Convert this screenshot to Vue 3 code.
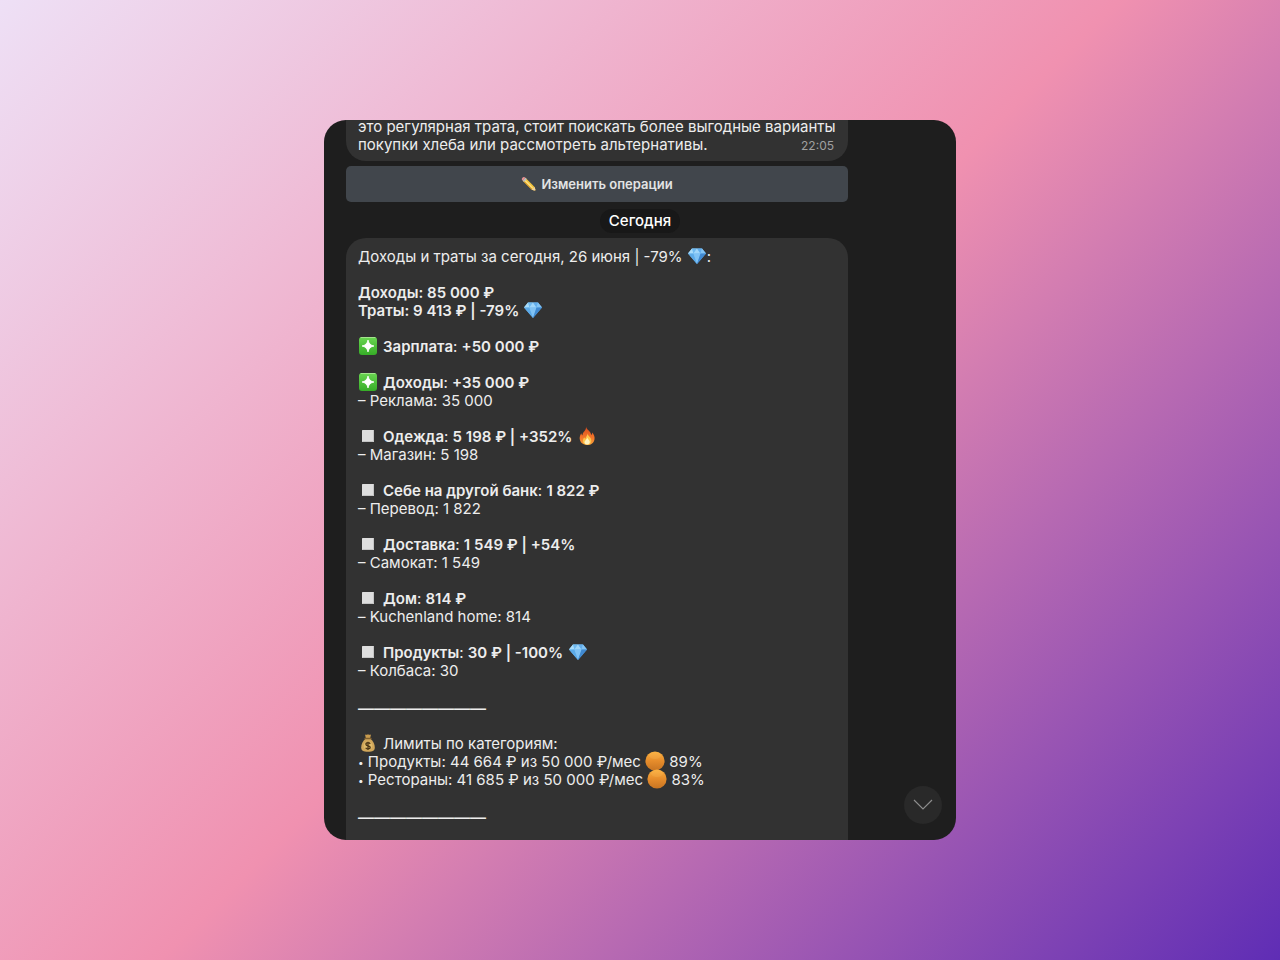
<template>
  <main class="backdrop">
    <svg class="symbols" aria-hidden="true">
      <defs>
        <linearGradient id="gem-fill" x1="0" y1="0" x2="1" y2="1">
          <stop offset="0" stop-color="#9bdcff" />
          <stop offset="1" stop-color="#3d8fe0" />
        </linearGradient>
        <linearGradient id="green-fill" x1="0" y1="0" x2="0" y2="1">
          <stop offset="0" stop-color="#6ad552" />
          <stop offset="1" stop-color="#36ad27" />
        </linearGradient>
        <linearGradient id="orange-fill" x1="0" y1="0" x2="0" y2="1">
          <stop offset="0" stop-color="#fbb03f" />
          <stop offset="0.5" stop-color="#e68c2b" />
          <stop offset="1" stop-color="#c87422" />
        </linearGradient>
        <linearGradient id="fire-fill" x1="0" y1="0" x2="0" y2="1">
          <stop offset="0" stop-color="#d94a1c" />
          <stop offset="0.6" stop-color="#f2762a" />
          <stop offset="1" stop-color="#f6a13a" />
        </linearGradient>
      </defs>
      <symbol id="gem" viewBox="0 0 20 20">
        <path d="M5 2.500h10L19 7.500l-9 10.500L1 7.500z" fill="url(#gem-fill)" />
        <path d="M5 2.500L6.500 7.500H1z" fill="#a9dcfa" />
        <path d="M5 2.500h5l-3.500 5z" fill="#6fb9f0" />
        <path d="M10 2.500l3.500 5h-7z" fill="#a0d6fa" />
        <path d="M10 2.500h5l-1.500 5z" fill="#62adec" />
        <path d="M15 2.500l4 5h-5.500z" fill="#84c4f4" />
        <path d="M1 7.500h5.500L10 18z" fill="#5caae8" />
        <path d="M6.500 7.500h7L10 18z" fill="#80c2f4" />
        <path d="M13.500 7.500H19L10 18z" fill="#4089d0" />
      </symbol>
      <symbol id="sparkle" viewBox="0 0 20 20">
        <rect x="1" y="1" width="18" height="18" rx="3" fill="url(#green-fill)" />
        <path d="M3 1.500h14" stroke="#a4e58d" stroke-width="1" stroke-linecap="round" />
        <path d="M10 4Q10.900 9.100 16 10Q10.900 10.900 10 16Q9.100 10.900 4 10Q9.100 9.100 10 4z" fill="#fff" stroke="#fff" stroke-width="0.800" />
      </symbol>
      <symbol id="square" viewBox="0 0 20 20">
        <rect x="4" y="4" width="12" height="12" rx="0.500" fill="#dedede" />
        <path d="M4.500 15.500h11v-11" fill="none" stroke="#c4c4c4" />
      </symbol>
      <symbol id="fire" viewBox="0 0 20 20">
        <path d="M9 0.500C9.500 4 14 5 14.200 9c.8-.6 1-1.500.9-2.600C17 8.500 18 10.700 17.500 13.200 17 17 14 19 10.400 19 6.300 19 3 16.600 2.700 12.800c-.2-2.300.7-4 1.500-5.600.2 1 .6 1.800 1.300 2.200C5.500 5.500 9.500 5 9 0.500z" fill="url(#fire-fill)" />
        <path d="M10.500 7.500c.3 2.500 3.800 3.500 3.800 7 0 2.600-1.700 4.200-4.200 4.200-2.600 0-4.300-1.700-4.200-4 .1-1.600.8-2.600 1.400-3.500.3 1 .7 1.400 1.200 1.600.2-2 1.900-2.800 2-5.300z" fill="#fdc64d" />
        <path d="M10.300 11.500c.3 1.800 2.500 2.600 2.500 4.600 0 1.600-1 2.500-2.700 2.500-1.600 0-2.700-1-2.600-2.500.1-1.700 2.500-2.600 2.800-4.600z" fill="#fff3c0" />
      </symbol>
      <symbol id="money" viewBox="0 0 20 20">
        <path d="M7.500 5.800C4.500 8.500 3.200 11.500 3.200 14.500c0 3 2 4.300 6.800 4.300s6.800-1.300 6.800-4.300c0-3-1.300-6-4.300-8.700z" fill="#d0a65a" />
        <path d="M7 1.500c1.200.7 2 .3 3-.3 1 .6 1.800 1 3 .3l-.8 3.500H7.800z" fill="#c99c4f" />
        <path d="M7 5.500h6" stroke="#80602e" stroke-width="1.400" stroke-linecap="round" />
        <circle cx="10" cy="12.800" r="4.300" fill="#e0bb6b" />
        <path d="M12.200 10.800c-.5-.8-1.200-1.100-2.200-1.100-1.200 0-2.100.6-2.100 1.500 0 2.300 4.300.9 4.300 3.100 0 .9-.9 1.600-2.200 1.600-1.100 0-1.900-.4-2.300-1.200M10 8.700v8.200" fill="none" stroke="#4a3415" stroke-width="1.300" />
      </symbol>
      <symbol id="circle" viewBox="0 0 20 20">
        <circle cx="10" cy="10" r="9.600" fill="url(#orange-fill)" />
        <ellipse cx="10" cy="4.500" rx="6" ry="3.500" fill="#ffc566" opacity="0.200" />
      </symbol>
      <symbol id="pencil" viewBox="0 0 20 20">
        <path d="M5.500 2.200L17 13.700l1.500 4.900-5-1.400L2.200 5.800z" fill="#f4c63d" />
        <path d="M4.300 3.600L15.800 15l-2.300 2.200L2.200 5.800z" fill="#d99a25" />
        <path d="M3.900 4.500L15 15.700" stroke="#ffe07a" stroke-width="2" />
        <path d="M2.200 5.800C.6 4.300.6 3.300 1.800 2.100s2.400-1.200 3.700.1z" fill="#e88f93" />
        <path d="M2.200 5.800l3.300-3.600 1.700 1.700-3.400 3.500z" fill="#b8bcc2" />
        <path d="M13.500 17.200l3.500-3.500 1.500 4.900z" fill="#efd1a2" />
        <path d="M17 18.200l1-1 .5 1.400z" fill="#222" />
      </symbol>
    </svg>

    <section class="chat">
      <article class="bubble previous">
        <p>это регулярная трата, стоит поискать более выгодные варианты</p>
        <div class="last-line">
          <p>покупки хлеба или рассмотреть альтернативы.</p>
          <time>22:05</time>
        </div>
      </article>
      <button class="edit" type="button">
        <svg class="pencil"><use href="#pencil" /></svg>
        Изменить операции
      </button>

      <div class="date"><span>Сегодня</span></div>

      <article class="bubble report">
        <p>Доходы и траты за сегодня, 26 июня | -79% <svg class="emoji"><use href="#gem" /></svg>:</p>
        <p class="strong">
          Доходы: 85 000 ₽<br>
          Траты: 9 413 ₽ | -79% <svg class="emoji"><use href="#gem" /></svg>
        </p>
        <p v-for="item in items" :key="item.name">
          <svg class="emoji"><use :href="'#' + item.icon" /></svg>
          <span class="name"><b>{{ item.name }}</b>: <b>{{ item.amount }}</b></span>
          <svg v-if="item.mark" class="emoji"><use :href="'#' + item.mark" /></svg>
          <template v-if="item.detail"><br>– {{ item.detail }}</template>
        </p>
        <p class="rule">————————</p>
        <p>
          <svg class="emoji"><use href="#money" /></svg>
          <span class="name">Лимиты по категориям:</span>
          <template v-for="limit in limits" :key="limit.name">
            <br><span class="bullet">•</span> {{ limit.name }}: {{ limit.spent }} ₽ из 50 000 ₽/мес <svg class="emoji"><use href="#circle" /></svg> {{ limit.percent }}%
          </template>
        </p>
        <p class="rule">————————</p>
      </article>

      <button class="scroll-down" type="button" aria-label="Вниз">
        <svg viewBox="0 0 20 12"><path d="M1 1l9 9 9-9" /></svg>
      </button>
    </section>
  </main>
</template>

<script setup>
const items = [
  { icon: 'sparkle', name: 'Зарплата', amount: '+50 000 ₽' },
  { icon: 'sparkle', name: 'Доходы', amount: '+35 000 ₽', detail: 'Реклама: 35 000' },
  { icon: 'square', name: 'Одежда', amount: '5 198 ₽ | +352%', mark: 'fire', detail: 'Магазин: 5 198' },
  { icon: 'square', name: 'Себе на другой банк', amount: '1 822 ₽', detail: 'Перевод: 1 822' },
  { icon: 'square', name: 'Доставка', amount: '1 549 ₽ | +54%', detail: 'Самокат: 1 549' },
  { icon: 'square', name: 'Дом', amount: '814 ₽', detail: 'Kuchenland home: 814' },
  { icon: 'square', name: 'Продукты', amount: '30 ₽ | -100%', mark: 'gem', detail: 'Колбаса: 30' }
];

const limits = [
  { name: 'Продукты', spent: '44 664', percent: 89 },
  { name: 'Рестораны', spent: '41 685', percent: 83 }
];
</script>

<style>
body {
  margin: 0;
}
</style>

<style scoped>
.backdrop {
  box-sizing: border-box;
  min-height: 100vh;
  padding: 120px 24px;
  display: flex;
  justify-content: center;
  background: linear-gradient(135deg, #eee0f6 0%, #f091b0 50%, #5f2db5 100%);
  font-family: Inter, "Liberation Sans", sans-serif;
  font-size: 15px;
  line-height: 18px;
  color: #ededed;
}
.symbols {
  position: absolute;
  width: 0;
  height: 0;
}
.chat {
  position: relative;
  box-sizing: border-box;
  width: 100%;
  max-width: 632px;
  height: calc(100vh - 240px);
  padding: 0 108px 0 22px;
  border-radius: 22px;
  overflow: hidden;
  background: #1e1e1e;
}
.bubble {
  box-sizing: border-box;
  background: #323232;
}
p {
  margin: 0;
  white-space: nowrap;
}
.previous {
  padding: 0 14px 7px 12px;
  margin-top: -2px;
  border-radius: 0 0 20px 20px;
}
.last-line {
  display: flex;
  justify-content: space-between;
  align-items: flex-end;
}
time {
  font-size: 12px;
  line-height: 16px;
  color: #a0a0a0;
}
.edit {
  display: flex;
  align-items: center;
  justify-content: center;
  gap: 4px;
  width: 100%;
  height: 36px;
  margin-top: 5px;
  padding: 0;
  border: 0;
  border-radius: 5px;
  background: #41464c;
  color: #e2e3e4;
  font: 600 13px/18px Inter, "Liberation Sans", sans-serif;
  cursor: pointer;
}
.date {
  display: flex;
  justify-content: center;
  margin: 7px -86px 5px 0;
}
.date span {
  padding: 3px 9px;
  border-radius: 12px;
  background: #181818;
  font-weight: 500;
  color: #fff;
}
.report {
  display: flex;
  flex-direction: column;
  gap: 18px;
  padding: 10px 12px 40px;
  border-radius: 20px 20px 0 0;
}
.strong,
b {
  font-weight: 600;
}
.name {
  margin: 0 5px;
}
.rule {
  margin-top: 1px;
  font-size: 16px;
  font-weight: 500;
}
.bullet {
  font-size: 10px;
  line-height: 1;
  vertical-align: 1px;
}
.emoji {
  display: inline-block;
  width: 20px;
  height: 20px;
  margin: -4px 0;
  vertical-align: 0;
}
.pencil {
  width: 16px;
  height: 16px;
}
.scroll-down {
  position: absolute;
  right: 14px;
  bottom: 16px;
  display: flex;
  align-items: center;
  justify-content: center;
  width: 38px;
  height: 38px;
  padding: 0;
  border: 0;
  border-radius: 50%;
  background: #292929;
  cursor: pointer;
}
.scroll-down svg {
  width: 20px;
  height: 12px;
  fill: none;
  stroke: #8c8c8c;
  stroke-width: 1.2;
}
</style>
